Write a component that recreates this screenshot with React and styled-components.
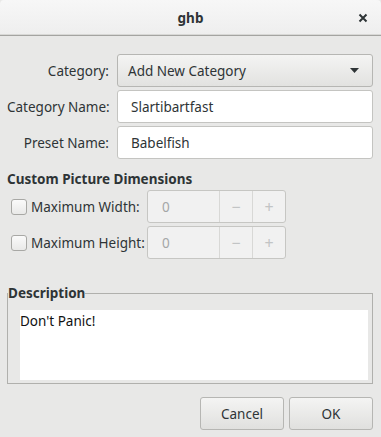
import styled, { createGlobalStyle } from "styled-components";

const Global = createGlobalStyle`
  html, body {
    margin: 0;
    padding: 0;
    background: #e8e8e7;
  }
  body {
    font-family: "Noto Sans", "DejaVu Sans", sans-serif;
    font-size: 13.5px;
    color: #2e3436;
  }
`;

const Window = styled.div`
  width: 381px;
  height: 437px;
  background: #e8e8e7;
  display: flex;
  flex-direction: column;
  overflow: hidden;
`;

const TitleBar = styled.div`
  height: 35px;
  border-bottom: 1px solid #a4a4a1;
  border-radius: 4px 4px 0 0;
  background: linear-gradient(to bottom, #f7f7f7, #eeeeee);
  display: flex;
  align-items: center;
  justify-content: center;
  position: relative;
  box-shadow: inset 0 -1px 0 #d8d8d6;
`;

const Title = styled.span`
  font-weight: bold;
  font-size: 13.5px;
  color: #2e3436;
`;

const Close = styled.button`
  position: absolute;
  right: 8px;
  top: 8px;
  width: 20px;
  height: 20px;
  border: none;
  background: none;
  padding: 0;
  display: flex;
  align-items: center;
  justify-content: center;
`;

const Body = styled.div`
  padding: 18px 8px 0 7px;
  display: flex;
  flex-direction: column;
`;

const Form = styled.div`
  display: grid;
  grid-template-columns: 102px 1fr;
  column-gap: 8px;
  row-gap: 3px;
  align-items: center;
`;

const Label = styled.label`
  text-align: right;
  white-space: nowrap;
`;

const Combo = styled.div`
  height: 31px;
  border: 1px solid #b6b6b3;
  border-radius: 3px;
  background: linear-gradient(to bottom, #f4f4f3, #e2e2e0);
  display: flex;
  align-items: center;
  justify-content: space-between;
  padding: 0 13px 0 10px;
`;

const Entry = styled.div`
  height: 31px;
  border: 1px solid #c4c4c1;
  border-radius: 3px;
  background: #ffffff;
  display: flex;
  align-items: center;
  padding: 0 13px;
`;

const Heading = styled.div`
  font-weight: bold;
  margin-top: 12px;
  line-height: 17px;
`;

const DimRows = styled.div`
  display: flex;
  flex-direction: column;
  gap: 3px;
  margin-top: 2px;
  padding-left: 4px;
`;

const DimRow = styled.div`
  display: grid;
  grid-template-columns: 136px auto;
  align-items: center;
`;

const CheckLabel = styled.label`
  display: flex;
  align-items: center;
  gap: 4px;
  white-space: nowrap;
`;

const Check = styled.span`
  width: 14px;
  height: 14px;
  border: 1px solid #a8a8a5;
  border-radius: 3px;
  background: linear-gradient(to bottom, #fafafa, #e9e9e8);
`;

const Spin = styled.div`
  width: 137px;
  height: 31px;
  border: 1px solid #c6c6c3;
  border-radius: 3px;
  background: #f1f1f1;
  display: flex;
  color: #a4a6a7;
`;

const SpinValue = styled.div`
  flex: 1;
  display: flex;
  align-items: center;
  padding-left: 14px;
`;

const SpinButton = styled.div`
  width: 32px;
  border-left: 1px solid #d8d8d6;
  display: flex;
  align-items: center;
  justify-content: center;
  font-size: 16px;
  color: #c2c4c5;
`;

const Frame = styled.fieldset`
  margin: 26px 0 0 0;
  padding: 8px 4px 3px 12px;
  border: 1px solid #b0b0ad;
  border-radius: 0;
  min-width: 0;
`;

const Legend = styled.legend`
  font-weight: bold;
  padding: 0;
  margin-left: -12px;
  line-height: 17px;
`;

const TextView = styled.div`
  background: #ffffff;
  height: 70px;
  padding: 2px 0;
  box-sizing: border-box;
  color: #111;
`;

const Actions = styled.div`
  display: flex;
  justify-content: flex-end;
  gap: 5px;
  margin-top: 13px;
`;

const Button = styled.button`
  width: 84px;
  height: 33px;
  border: 1px solid #b6b6b3;
  border-radius: 3px;
  background: linear-gradient(to bottom, #f4f4f3, #e0e0de);
  font-family: inherit;
  font-size: 13.5px;
  color: #2e3436;
  padding: 0;
`;

const CloseIcon = () => (
  <svg width="10" height="10" viewBox="0 0 10 10">
    <path d="M1.5 1.5 L8.5 8.5 M8.5 1.5 L1.5 8.5" stroke="#2e3436" strokeWidth="2" />
  </svg>
);

const Arrow = () => (
  <svg width="9" height="5" viewBox="0 0 9 5">
    <path d="M0 0 H9 L4.5 5 Z" fill="#2e3436" />
  </svg>
);

function App() {
  const dims = ["Maximum Width:", "Maximum Height:"];
  return (
    <Window>
      <Global />
      <TitleBar>
        <Title>ghb</Title>
        <Close>
          <CloseIcon />
        </Close>
      </TitleBar>
      <Body>
        <Form>
          <Label>Category:</Label>
          <Combo>
            <span>Add New Category</span>
            <Arrow />
          </Combo>
          <Label>Category Name:</Label>
          <Entry>Slartibartfast</Entry>
          <Label>Preset Name:</Label>
          <Entry>Babelfish</Entry>
        </Form>
        <Heading>Custom Picture Dimensions</Heading>
        <DimRows>
          {dims.map((d) => (
            <DimRow key={d}>
              <CheckLabel>
                <Check />
                {d}
              </CheckLabel>
              <Spin>
                <SpinValue>0</SpinValue>
                <SpinButton>−</SpinButton>
                <SpinButton>+</SpinButton>
              </Spin>
            </DimRow>
          ))}
        </DimRows>
        <Frame>
          <Legend>Description</Legend>
          <TextView>Don't Panic!</TextView>
        </Frame>
        <Actions>
          <Button>Cancel</Button>
          <Button>OK</Button>
        </Actions>
      </Body>
    </Window>
  );
}

export default App;
